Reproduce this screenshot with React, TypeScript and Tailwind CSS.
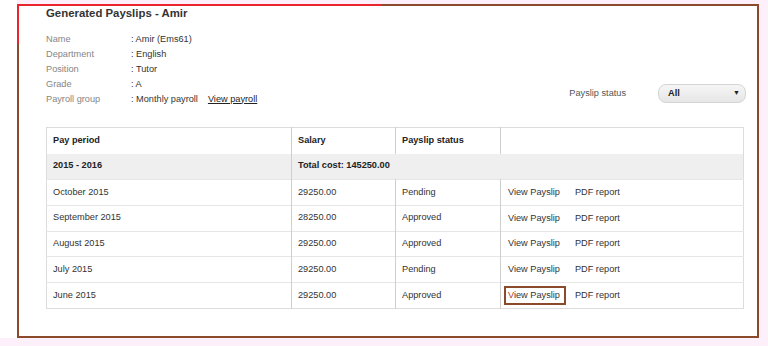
const rows = [
  { period: "October 2015", salary: "29250.00", status: "Pending" },
  { period: "September 2015", salary: "28250.00", status: "Approved" },
  { period: "August 2015", salary: "29250.00", status: "Approved" },
  { period: "July 2015", salary: "29250.00", status: "Pending" },
  { period: "June 2015", salary: "29250.00", status: "Approved" },
];

const info = [
  ["Name", "Amir (Ems61)"],
  ["Department", "English"],
  ["Position", "Tutor"],
  ["Grade", "A"],
];

export default function App() {
  return (
    <div
      className="flex w-[768px] h-[346px] bg-[#fdf0fb] text-[9.2px] text-[#333]"
      style={{ fontFamily: '"Liberation Sans", Arial, sans-serif' }}
    >
      <div className="w-[17px] h-[338px] bg-white shrink-0" />
      <div className="mt-[4px]">
        <div className="relative w-[742px] h-[334px] bg-white border-2 border-[#8b4a2b] pl-[27px] pr-[13px]">
          {/* red annotation edge */}
          <div className="absolute -top-[2px] -left-[2px] w-[365px] h-[2px] bg-[#e8242c]" />
          <div className="absolute -top-[2px] -left-[2px] w-[2px] h-[40px] bg-[#e8242c]" />

          <h2 className="font-bold text-[11.4px] leading-[15px] text-[#333]">
            Generated Payslips - Amir
          </h2>

          <div className="flex items-end justify-between mt-[10.5px]">
            <div className="leading-[15px]">
              {info.map(([label, value]) => (
                <div key={label} className="flex">
                  <span className="w-[85px] text-[#858585]">{label}</span>
                  <span>: {value}</span>
                </div>
              ))}
              <div className="flex">
                <span className="w-[85px] text-[#858585]">Payroll group</span>
                <span>: Monthly payroll</span>
                <a className="ml-[10px] underline text-[#222]">View payroll</a>
              </div>
            </div>
            <div className="flex items-center gap-[32px] mb-[3.5px] -mr-[2px]">
              <span className="text-[#555]">Payslip status</span>
              <div className="flex items-center justify-between w-[88px] h-[19px] rounded-[8px] border border-[#d4d4d4] bg-gradient-to-b from-[#f6f6f6] to-[#e6e6e6] pl-[9px] pr-[5px]">
                <span className="font-semibold text-[#222]">All</span>
                <span className="text-[7px] text-[#222]">▼</span>
              </div>
            </div>
          </div>

          <table className="mt-[20.5px] w-[698px] table-fixed border-collapse border border-[#dcdcdc]">
            <colgroup>
              <col className="w-[245px]" />
              <col className="w-[104px]" />
              <col className="w-[105px]" />
              <col />
            </colgroup>
            <thead>
              <tr className="h-[26px] text-left font-bold text-[#222]">
                <th className="px-[6px] border-r border-[#cfcfcf]">Pay period</th>
                <th className="px-[6px] border-r border-[#cfcfcf]">Salary</th>
                <th className="px-[6px] border-r border-[#cfcfcf]">Payslip status</th>
                <th />
              </tr>
            </thead>
            <tbody>
              <tr className="h-[26px] bg-[#efefef] font-bold text-[#222]">
                <td className="px-[6px] border-r border-[#cfcfcf]">2015 - 2016</td>
                <td colSpan={3} className="px-[6px]">Total cost: 145250.00</td>
              </tr>
              {rows.map((r, i) => (
                <tr key={r.period} className="h-[25.8px] border-t border-[#e6e6e6]">
                  <td className="px-[6px] border-r border-[#cfcfcf]">{r.period}</td>
                  <td className="px-[6px] border-r border-[#cfcfcf]">{r.salary}</td>
                  <td className="px-[6px] border-r border-[#cfcfcf]">{r.status}</td>
                  <td className="pl-[3px]">
                    <a
                      className={
                        i === rows.length - 1
                          ? "inline-block leading-[11px] py-[2px] pl-[2px] pr-[4px] border-2 border-[#8b4a2b]"
                          : "inline-block leading-[11px] py-[2px] pl-[2px] pr-[4px] border-2 border-transparent"
                      }
                    >
                      {i === rows.length - 1 ? (
                        <>
                          <span className="text-[#c0392b]">V</span>iew Payslip
                        </>
                      ) : (
                        "View Payslip"
                      )}
                    </a>
                    <a className="ml-[9px]">PDF report</a>
                  </td>
                </tr>
              ))}
            </tbody>
          </table>
        </div>
      </div>
    </div>
  );
}
